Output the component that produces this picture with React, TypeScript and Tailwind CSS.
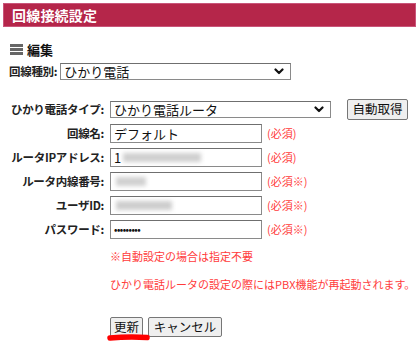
import React from "react";

const Chevron = () => (
  <svg width="10" height="7" viewBox="0 0 10 7" className="shrink-0">
    <path d="M1.5 1.5 L5 5 L8.5 1.5" fill="none" stroke="#111" strokeWidth="2.2" strokeLinecap="round" strokeLinejoin="round" />
  </svg>
);

const Label = ({ children }: { children: React.ReactNode }) => (
  <div className="w-[104px] shrink-0 text-right font-bold text-[11.5px] tracking-[-0.3px] text-[#222] leading-none">{children}</div>
);

const Req = ({ children }: { children: React.ReactNode }) => (
  <span className="ml-[5px] text-[11px] text-[#ff3b3b] leading-none">{children}</span>
);

const Input = ({ children }: { children?: React.ReactNode }) => (
  <div className="ml-[6px] w-[152px] h-[19px] shrink-0 border border-[#8a8a8a] border-t-[#6f6f6f] bg-white flex items-center pl-[3px] text-[13px] text-[#111] leading-none overflow-hidden">
    {children}
  </div>
);

export default function App() {
  return (
    <div className="relative w-[418px] h-[344px] bg-white overflow-hidden font-['Noto_Sans_CJK_JP','Noto_Sans',sans-serif] text-[#222]">
      {/* header */}
      <div className="mt-[3px] ml-[3px] mr-[2px] h-[24px] bg-[#b5264a] border border-[#c9557a] flex items-center pl-[8px]">
        <span className="text-white font-bold text-[14px] leading-none tracking-[0.2px]">回線接続設定</span>
      </div>

      {/* edit heading */}
      <div className="mt-[15px] ml-[10px] flex items-center h-[14px]">
        <div className="w-[13px] h-[11px] flex flex-col justify-between">
          <div className="h-[3px] bg-[#666]" />
          <div className="h-[3px] bg-[#666]" />
          <div className="h-[3px] bg-[#666]" />
        </div>
        <span className="ml-[4px] font-bold text-[13px] leading-none text-[#111]">編集</span>
      </div>

      {/* line type */}
      <div className="mt-[7px] ml-[9px] flex items-center h-[17px]">
        <span className="font-bold text-[11.5px] tracking-[-0.3px] leading-none text-[#222]">回線種別:</span>
        <div className="ml-[3px] w-[231px] h-[17px] border border-[#8a8a8a] border-t-[#6f6f6f] flex items-center justify-between pl-[3px] pr-[6px] text-[13px] leading-none text-[#111]">
          <span>ひかり電話</span>
          <Chevron />
        </div>
      </div>

      {/* hikari type */}
      <div className="mt-[19px] flex items-center h-[21px]">
        <Label>ひかり電話タイプ:</Label>
        <div className="ml-[6px] w-[221px] h-[17px] border border-[#8a8a8a] border-t-[#6f6f6f] flex items-center justify-between pl-[3px] pr-[6px] text-[13px] leading-none text-[#111]">
          <span>ひかり電話ルータ</span>
          <Chevron />
        </div>
        <button className="ml-[16px] w-[61px] h-[21px] bg-[#efefef] border border-[#767676] rounded-[2px] text-[12.5px] leading-none text-[#111] flex items-center justify-center">
          自動取得
        </button>
      </div>

      <div className="mt-[4px] flex items-center h-[19px]">
        <Label>回線名:</Label>
        <Input>デフォルト</Input>
        <Req>(必須)</Req>
      </div>

      <div className="mt-[5px] flex items-center h-[19px]">
        <Label>ルータIPアドレス:</Label>
        <Input>
          <span>1</span>
          <span className="ml-[2px] w-[78px] h-[9px] bg-[#cfcfcf] blur-[2px]" />
        </Input>
        <Req>(必須)</Req>
      </div>

      <div className="mt-[5px] flex items-center h-[19px]">
        <Label>ルータ内線番号:</Label>
        <Input>
          <span className="ml-[2px] w-[30px] h-[9px] bg-[#d0d0d0] blur-[2px]" />
        </Input>
        <Req>(必須※)</Req>
      </div>

      <div className="mt-[5px] flex items-center h-[19px]">
        <Label>ユーザID:</Label>
        <Input>
          <span className="ml-[2px] w-[56px] h-[9px] bg-[#cdcdcd] blur-[2px]" />
        </Input>
        <Req>(必須※)</Req>
      </div>

      <div className="mt-[5px] flex items-center h-[19px]">
        <Label>パスワード:</Label>
        <Input>
          <span className="text-[9px] font-bold tracking-[-0.5px] leading-none">•••••••••</span>
        </Input>
        <Req>(必須※)</Req>
      </div>

      <div className="mt-[12px] ml-[110px] text-[11px] leading-none text-[#ff3b3b]">※自動設定の場合は指定不要</div>
      <div className="mt-[17px] ml-[110px] text-[11px] leading-none text-[#ff3b3b] whitespace-nowrap">
        ひかり電話ルータの設定の際にはPBX機能が再起動されます。
      </div>

      <div className="mt-[27px] ml-[110px] flex items-center gap-[5px]">
        <button className="w-[33px] h-[20px] bg-[#efefef] border border-[#767676] rounded-[2px] text-[12.5px] leading-none text-[#111] flex items-center justify-center">
          更新
        </button>
        <button className="w-[74px] h-[20px] bg-[#efefef] border border-[#767676] rounded-[2px] text-[12.5px] leading-none text-[#111] flex items-center justify-center">
          キャンセル
        </button>
      </div>

      {/* red annotation underline */}
      <svg className="absolute left-[103px] top-[330px]" width="52" height="14" viewBox="0 0 52 14">
        <path d="M7 8 Q25 6.5 44 7.5" fill="none" stroke="#f00" strokeWidth="5.5" strokeLinecap="round" />
      </svg>
    </div>
  );
}
